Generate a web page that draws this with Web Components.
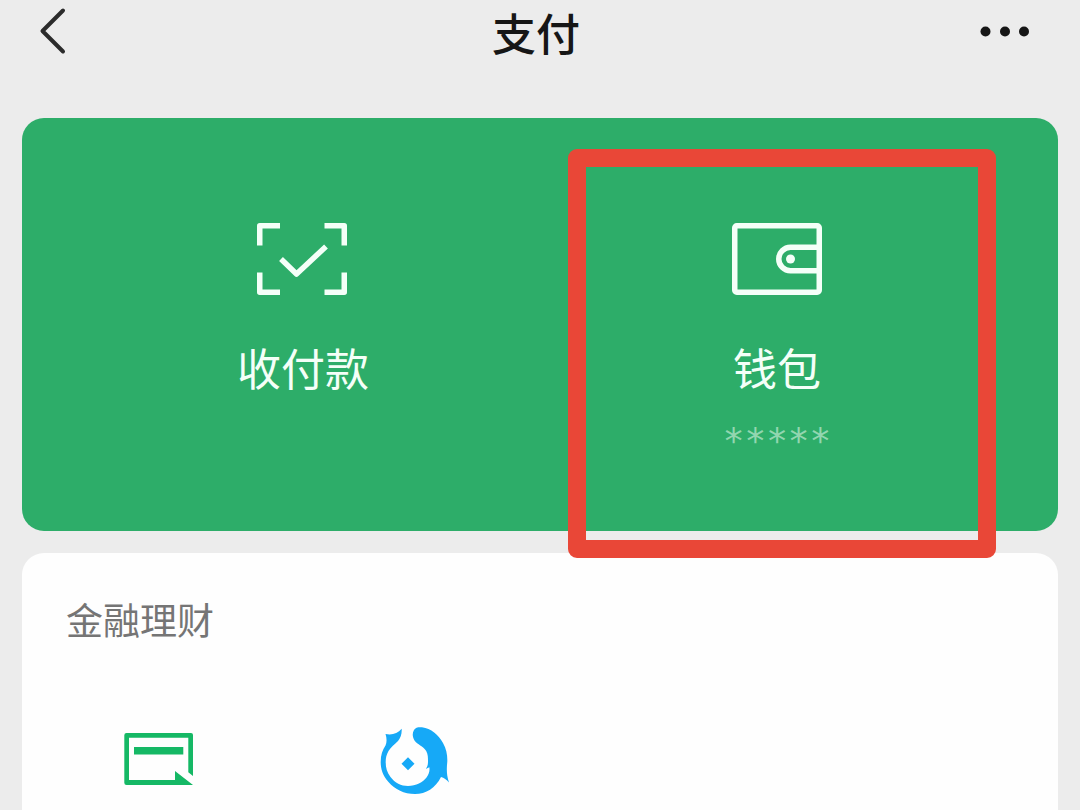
<!DOCTYPE html>
<html lang="zh-CN">
<head>
<meta charset="utf-8">
<meta name="viewport" content="width=device-width, initial-scale=1">
<title>支付</title>
<style>
  body { margin: 0; background: #ececec; font-family: "KaiTi", "Kaiti SC", "Noto Sans CJK SC", sans-serif; }
</style>
</head>
<body>
<pay-page></pay-page>
<script>
const define = (name, html) => {
  const template = document.createElement('template');
  template.innerHTML = html;
  customElements.define(name, class extends HTMLElement {
    constructor() {
      super();
      this.attachShadow({ mode: 'open' }).append(template.content.cloneNode(true));
    }
  });
};

define('pay-header', `
  <style>
    :host { display: grid; grid-template-columns: 92px 1fr 100px; align-items: center; height: 64px; color: #161616; }
    button { display: flex; height: 64px; padding: 0; border: 0; background: none; color: inherit; align-items: center; }
    button.more { justify-content: flex-end; }
    svg { display: block; }
    h1 { margin: 0; text-align: center; font-size: 44px; line-height: 64px; font-weight: 500; }
  </style>
  <button aria-label="返回"><svg width="92" height="64" viewBox="0 0 92 64" fill="none" stroke="#2b2b2b" stroke-width="4" stroke-linecap="round" stroke-linejoin="round"><path d="M63 10.500 42.500 31 63 51.500"/></svg></button>
  <h1><slot></slot></h1>
  <button class="more" aria-label="更多"><svg width="100" height="64" viewBox="0 0 100 64" fill="#161616"><circle cx="5.500" cy="31.500" r="5"/><circle cx="25" cy="31.500" r="5"/><circle cx="44" cy="31.500" r="5"/></svg></button>
`);

define('pay-tile', `
  <style>
    :host { display: block; }
    button { display: flex; flex-direction: column; align-items: center; width: 100%; padding: 0; border: 0; background: none; color: #f4fff8; font: inherit; }
    .label { margin-top: 40px; font-size: 44px; line-height: 64px; }
    .note { margin-top: 18px; font-family: "DejaVu Sans Mono", monospace; font-size: 36px; line-height: 48px; color: #92d6b0; }
  </style>
  <button><slot name="icon"></slot><span class="label"><slot></slot></span><span class="note"><slot name="note"></slot></span></button>
`);

define('highlight-frame', `
  <style>
    :host { display: block; box-sizing: border-box; border: 18px solid #e94737; border-radius: 9px; pointer-events: none; }
  </style>
`);

define('pay-hero', `
  <style>
    :host { position: relative; display: grid; grid-template-columns: 1fr 1fr; box-sizing: border-box; min-height: 413px; padding: 105px 44px 64px; border-radius: 22px; background: #2dad69; }
    svg { display: block; }
    highlight-frame { position: absolute; top: 31px; right: 62px; bottom: -27px; width: 428px; z-index: 1; }
  </style>
  <pay-tile>
    <svg slot="icon" width="92" height="72" viewBox="0 0 92 72" fill="none" stroke="#f4fff8" stroke-width="5.500" stroke-linejoin="round"><path d="M2.750 22.500V2.750H23M67.500 2.750H87.250V22.500M87.250 49.500V69.250H67.500M23 69.250H2.750V49.500"/><path d="M24 36 39.500 51 69 23.500" stroke-width="5.500"/></svg>
    收付款
  </pay-tile>
  <pay-tile>
    <svg slot="icon" width="90" height="72" viewBox="0 0 90 72" fill="none" stroke="#f4fff8" stroke-width="5.500"><rect x="2.750" y="2.750" width="84.500" height="66.500" rx="2"/><path d="M87 24.250H58.500A11.750 11.750 0 0 0 58.500 47.750H87"/><circle cx="58.500" cy="36" r="4.500" fill="#f4fff8" stroke="none"/></svg>
    钱包<span slot="note">*****</span>
  </pay-tile>
  <highlight-frame></highlight-frame>
`);

define('pay-section', `
  <style>
    :host { display: block; box-sizing: border-box; padding-top: 38px; padding-bottom: 14px; border-radius: 22px 22px 0 0; background: #fefefe; }
    h2 { margin: 0 44px; font-size: 37px; line-height: 56px; font-weight: 400; color: #757575; }
    .grid { display: grid; grid-template-columns: repeat(4, 1fr); padding: 0 4px 0 8px; margin-top: 78px; }
  </style>
  <h2><slot name="title"></slot></h2>
  <div class="grid"><slot></slot></div>
`);

define('service-link', `
  <style>
    :host { display: block; }
    a { display: flex; justify-content: center; }
  </style>
  <a href="#"><slot></slot></a>
`);

define('pay-page', `
  <style>
    :host { display: flex; flex-direction: column; min-height: 100vh; }
    main { flex: 1; display: flex; flex-direction: column; gap: 22px; padding: 54px 22px 0; }
    pay-section { flex: 1; }
    svg { display: block; }
  </style>
  <pay-header>支付</pay-header>
  <main>
    <pay-hero></pay-hero>
    <pay-section>
      <span slot="title">金融理财</span>
      <service-link aria-label="信用卡还款">
        <svg width="72" height="72" viewBox="0 0 72 72" fill="#15b865"><path d="M4.500 8H69a2 2 0 0 1 2 2V51L66.300 47.300V12.700H7V55H53V46L71 60H4.500a2.200 2.200 0 0 1-2.200-2.200V10.200A2.200 2.200 0 0 1 4.500 8Z"/><path d="M12 22H61.300V29.500H12Z"/></svg>
      </service-link>
      <service-link aria-label="理财通">
        <svg width="70" height="72" viewBox="0 0 70 72" fill="#16a9f7"><path d="M22.700 3.800C23 9 21.500 13 19 16C15.500 19.500 12 22 9.500 26C7.500 29.500 6.700 33 6.700 37C6.700 43 8 47.500 11.500 52C16 58 22 61 29 61C37 61 44 57.500 47.700 52.300C50 49 51 45.500 50.300 42.300L46.700 44C48.300 42 49 40 49 36.500C49 32.500 49 29.500 47.200 26C44 21 38.500 19.500 35.500 15.500C33.500 12 33 8.500 35 5C36.500 2 40 2 43 2.200C52 3.500 59.500 9.500 64 18C67.500 24.500 68.500 30 68.300 36.700C67.500 44 67.500 50 70 57.500C67.500 54.500 65 53 62 52C56.500 63 47 69 36 69C25 69 16 64.500 9.500 57C3.500 50 1.700 44 1.700 37C1.700 30 3.500 25 6.500 20.500C8 17 7.800 13 6.500 9C13 10.500 18.500 8.500 22.700 3.800Z"/><path d="M29 32.300 35.500 38.800 29 45.300 22.500 38.800Z"/></svg>
      </service-link>
    </pay-section>
  </main>
`);
</script>
</body>
</html>
